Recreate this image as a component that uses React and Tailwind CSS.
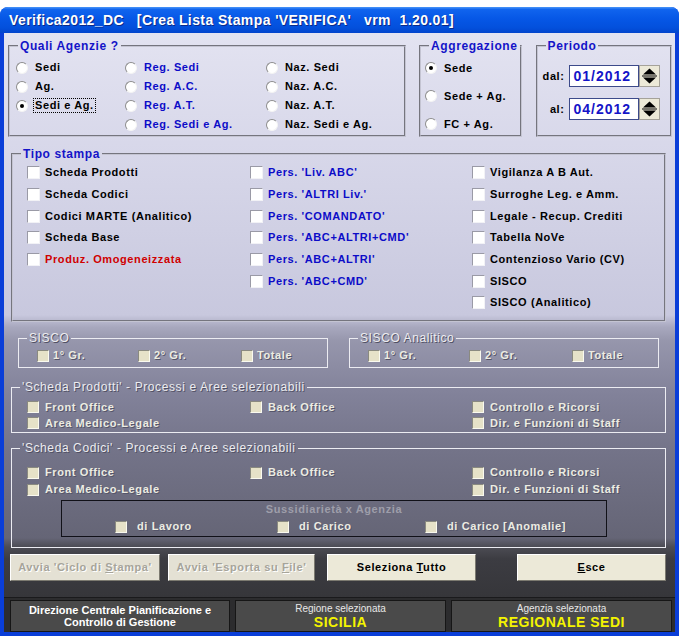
import React from 'react';

const txt = "font-['Liberation_Sans',Arial,sans-serif] font-bold text-[11px] tracking-[0.6px] leading-none whitespace-nowrap";

const Radio = ({ checked = false, focus = false, color = 'text-black', children }) => (
    <div className="flex items-center gap-[7px] h-full">
        <span className="relative flex items-center justify-center w-[12px] h-[12px] rounded-full bg-white border border-t-[#8d8d8d] border-l-[#8d8d8d] border-r-[#f4f4f4] border-b-[#f4f4f4] shrink-0">
            {checked && <span className="w-[4px] h-[4px] rounded-full bg-black" />}
        </span>
        <span className={`${txt} ${color} ${focus ? 'border border-dotted border-black px-[1px] py-[1px] -ml-[2px]' : ''}`}>
            {children}
        </span>
    </div>
);

const Check = ({ color = 'text-black', children }) => (
    <div className="flex items-center gap-[5px] h-full">
        <span className="w-[13px] h-[13px] bg-white border border-t-[#9a9aa6] border-l-[#9a9aa6] border-r-[#f2f2f6] border-b-[#f2f2f6] shrink-0" />
        <span className={`${txt} ${color}`}>{children}</span>
    </div>
);

const DisCheck = ({ gap = 'gap-[4px]', children }) => (
    <div className={`flex items-center ${gap} h-full`}>
        <span className="w-[12px] h-[12px] bg-[#e6e2c8] border border-t-[#8a8a80] border-l-[#8a8a80] border-r-[#fafaf0] border-b-[#fafaf0] shrink-0" />
        <span className={`${txt} text-[#ecece2] [text-shadow:1px_1px_0_#55556a]`}>{children}</span>
    </div>
);

const Legend = ({ light = false, children }) => (
    <legend
        className={`ml-[8px] px-[2px] ${txt} text-[12px] tracking-[0.3px] leading-[13px] ${
            light ? 'font-normal text-[#ececf0] [text-shadow:1px_1px_0_#505064]' : 'text-[#1414c8]'
        }`}
    >
        {children}
    </legend>
);

const Spin = () => (
    <div className="w-[21px] h-[22px] bg-[#ece9d8] border border-[#a5a29a] flex items-center justify-center">
        <svg width="17" height="18" viewBox="0 0 17 18">
            <polygon points="2,7.5 8.5,1.5 15,7.5" fill="#000" />
            <rect x="1" y="8.5" width="15" height="1" fill="#000" />
            <polygon points="2,10.5 15,10.5 8.5,16.5" fill="#000" />
        </svg>
    </div>
);

const Btn = ({ disabled = false, children, w }) => (
    <div
        className={`${w} h-[27px] flex items-center justify-center border border-t-white border-l-white border-r-[#7c7a70] border-b-[#7c7a70] ${
            disabled ? 'bg-[#e4e1d4] text-[#a6a49a] [text-shadow:1px_1px_0_#ffffff]' : 'bg-[#ece9d8] text-black'
        }`}
    >
        <span className={txt}>{children}</span>
    </div>
);

const App = () => {
    return (
        <div className="w-[686px] h-[643px] bg-white overflow-hidden">
            <div className="mt-[7px] w-[679px] h-[629px] rounded-t-[8px] bg-[#0a3ed8] flex flex-col overflow-hidden">

                {/* TITOLO */}
                <div className="h-[26px] shrink-0 flex items-center pl-[9px] bg-[linear-gradient(180deg,#4a96f8_0%,#1064ee_10%,#0657e6_45%,#0350dc_80%,#0244cc_100%)]">
                    <span className="font-['Liberation_Sans',Arial,sans-serif] font-bold text-[14px] tracking-[0.4px] text-white whitespace-pre [text-shadow:1px_1px_0_#0a2a8a]">
                        {"Verifica2012_DC   [Crea Lista Stampa 'VERIFICA'   vrm  1.20.01]"}
                    </span>
                </div>

                {/* CLIENT */}
                <div className="mx-[4px] mb-[4px] h-[599px] flex flex-col bg-[linear-gradient(180deg,#e3e3f1_0px,#d8d8ea_110px,#c8c8de_282px,#a8a8be_294px,#9696ac_308px,#82829a_360px,#737388_420px,#656576_505px,#4c4c54_514px,#3c3c42_526px,#36363a_564px)]">

                    {/* RIGA 1 */}
                    <div className="flex pt-[7px] pl-[4px]">
                        <fieldset className="w-[398px] h-[97px] border-2 [border-style:groove] border-[#c4c4d2]">
                            <Legend>Quali Agenzie ?</Legend>
                            <div className="flex pt-[6px]">
                                <div className="w-[115px] pl-[6px] flex flex-col">
                                    <div className="h-[19px]"><Radio>Sedi</Radio></div>
                                    <div className="h-[19px]"><Radio>Ag.</Radio></div>
                                    <div className="h-[19px]"><Radio checked focus>Sedi e Ag.</Radio></div>
                                </div>
                                <div className="w-[141px] flex flex-col">
                                    <div className="h-[19px]"><Radio color="text-[#0c0cc8]">Reg. Sedi</Radio></div>
                                    <div className="h-[19px]"><Radio color="text-[#0c0cc8]">Reg. A.C.</Radio></div>
                                    <div className="h-[19px]"><Radio color="text-[#0c0cc8]">Reg. A.T.</Radio></div>
                                    <div className="h-[19px]"><Radio color="text-[#0c0cc8]">Reg. Sedi e Ag.</Radio></div>
                                </div>
                                <div className="flex flex-col">
                                    <div className="h-[19px]"><Radio>Naz. Sedi</Radio></div>
                                    <div className="h-[19px]"><Radio>Naz. A.C.</Radio></div>
                                    <div className="h-[19px]"><Radio>Naz. A.T.</Radio></div>
                                    <div className="h-[19px]"><Radio>Naz. Sedi e Ag.</Radio></div>
                                </div>
                            </div>
                        </fieldset>

                        <fieldset className="ml-[13px] w-[97px] h-[97px] border-2 [border-style:groove] border-[#c4c4d2]">
                            <Legend>Aggregazione</Legend>
                            <div className="flex flex-col pl-[4px] pt-[2px]">
                                <div className="h-[28px]"><Radio checked>Sede</Radio></div>
                                <div className="h-[28px]"><Radio>Sede + Ag.</Radio></div>
                                <div className="h-[28px]"><Radio>FC + Ag.</Radio></div>
                            </div>
                        </fieldset>

                        <fieldset className="ml-[14px] w-[136px] h-[97px] border-2 [border-style:groove] border-[#c4c4d2]">
                            <Legend>Periodo</Legend>
                            <div className="flex flex-col gap-[11px] pt-[13px]">
                                {['dal:', 'al:'].map((l, i) => (
                                    <div key={l} className="flex items-center">
                                        <span className={`w-[27px] text-right ${txt} text-black`}>{l}</span>
                                        <div className="ml-[4px] w-[70px] h-[22px] bg-white border border-[#3c4a8a] flex items-center pl-[4px]">
                                            <span className="font-['Liberation_Sans',Arial,sans-serif] font-bold text-[14px] tracking-[1px] text-[#1414c8] leading-none">
                                                {i === 0 ? '01/2012' : '04/2012'}
                                            </span>
                                        </div>
                                        <Spin />
                                    </div>
                                ))}
                            </div>
                        </fieldset>
                    </div>

                    {/* TIPO STAMPA */}
                    <fieldset className="mt-[11px] ml-[7px] w-[655px] h-[174px] border-2 [border-style:groove] border-[#c4c4d2]">
                        <Legend>Tipo stampa</Legend>
                        <div className="flex pt-[2px]">
                            <div className="w-[237px] pl-[14px] flex flex-col">
                                <div className="h-[21.7px]"><Check>Scheda Prodotti</Check></div>
                                <div className="h-[21.7px]"><Check>Scheda Codici</Check></div>
                                <div className="h-[21.7px]"><Check>Codici MARTE (Analitico)</Check></div>
                                <div className="h-[21.7px]"><Check>Scheda Base</Check></div>
                                <div className="h-[21.7px]"><Check color="text-[#d00000]">Produz. Omogeneizzata</Check></div>
                            </div>
                            <div className="w-[222px] flex flex-col">
                                <div className="h-[21.7px]"><Check color="text-[#0c0cc8]">Pers. 'Liv. ABC'</Check></div>
                                <div className="h-[21.7px]"><Check color="text-[#0c0cc8]">Pers. 'ALTRI Liv.'</Check></div>
                                <div className="h-[21.7px]"><Check color="text-[#0c0cc8]">Pers. 'COMANDATO'</Check></div>
                                <div className="h-[21.7px]"><Check color="text-[#0c0cc8]">Pers. 'ABC+ALTRI+CMD'</Check></div>
                                <div className="h-[21.7px]"><Check color="text-[#0c0cc8]">Pers. 'ABC+ALTRI'</Check></div>
                                <div className="h-[21.7px]"><Check color="text-[#0c0cc8]">Pers. 'ABC+CMD'</Check></div>
                            </div>
                            <div className="flex flex-col">
                                <div className="h-[21.7px]"><Check>Vigilanza A B Aut.</Check></div>
                                <div className="h-[21.7px]"><Check>Surroghe Leg. e Amm.</Check></div>
                                <div className="h-[21.7px]"><Check>Legale - Recup. Crediti</Check></div>
                                <div className="h-[21.7px]"><Check>Tabella NoVe</Check></div>
                                <div className="h-[21.7px]"><Check>Contenzioso Vario (CV)</Check></div>
                                <div className="h-[21.7px]"><Check>SISCO</Check></div>
                                <div className="h-[21.7px]"><Check>SISCO (Analitico)</Check></div>
                            </div>
                        </div>
                    </fieldset>

                    {/* SISCO */}
                    <div className="flex mt-[10px] pl-[14px] gap-[21px]">
                        {['SISCO', 'SISCO Analitico'].map((t) => (
                            <fieldset key={t} className="w-[310px] h-[36px] border border-[#ececf2]">
                                <Legend light>{t}</Legend>
                                <div className="flex h-[17px] pl-[18px] mt-[3px]">
                                    <div className="w-[101px]"><DisCheck>1° Gr.</DisCheck></div>
                                    <div className="w-[103px]"><DisCheck>2° Gr.</DisCheck></div>
                                    <div><DisCheck>Totale</DisCheck></div>
                                </div>
                            </fieldset>
                        ))}
                    </div>

                    {/* SCHEDA PRODOTTI */}
                    <fieldset className="mt-[13px] ml-[7px] w-[655px] h-[52px] border border-[#ececf2]">
                        <Legend light>'Scheda Prodotti' - Processi e Aree selezionabili</Legend>
                        <div className="flex pt-[6px]">
                            <div className="w-[238px] pl-[15px] flex flex-col">
                                <div className="h-[16px]"><DisCheck gap="gap-[6px]">Front Office</DisCheck></div>
                                <div className="h-[16px]"><DisCheck gap="gap-[6px]">Area Medico-Legale</DisCheck></div>
                            </div>
                            <div className="w-[222px]">
                                <div className="h-[16px]"><DisCheck gap="gap-[6px]">Back Office</DisCheck></div>
                            </div>
                            <div className="flex flex-col">
                                <div className="h-[16px]"><DisCheck gap="gap-[6px]">Controllo e Ricorsi</DisCheck></div>
                                <div className="h-[16px]"><DisCheck gap="gap-[6px]">Dir. e Funzioni di Staff</DisCheck></div>
                            </div>
                        </div>
                    </fieldset>

                    {/* SCHEDA CODICI */}
                    <fieldset className="mt-[9px] ml-[7px] w-[655px] h-[106px] border border-[#ececf2]">
                        <Legend light>'Scheda Codici' - Processi e Aree selezionabili</Legend>
                        <div className="flex pt-[10px]">
                            <div className="w-[238px] pl-[15px] flex flex-col">
                                <div className="h-[17px]"><DisCheck gap="gap-[6px]">Front Office</DisCheck></div>
                                <div className="h-[17px]"><DisCheck gap="gap-[6px]">Area Medico-Legale</DisCheck></div>
                            </div>
                            <div className="w-[222px]">
                                <div className="h-[17px]"><DisCheck gap="gap-[6px]">Back Office</DisCheck></div>
                            </div>
                            <div className="flex flex-col">
                                <div className="h-[17px]"><DisCheck gap="gap-[6px]">Controllo e Ricorsi</DisCheck></div>
                                <div className="h-[17px]"><DisCheck gap="gap-[6px]">Dir. e Funzioni di Staff</DisCheck></div>
                            </div>
                        </div>
                        <div className="mt-[2px] ml-[49px] w-[546px] h-[37px] border border-[#111118] flex flex-col">
                            <div className={`h-[16px] flex items-center justify-center ${txt} text-[10px] text-[#9e9eaa]`}>
                                Sussidiarietà x Agenzia
                            </div>
                            <div className="flex h-[19px] pl-[53px]">
                                <div className="w-[162px]"><DisCheck gap="gap-[10px]">di Lavoro</DisCheck></div>
                                <div className="w-[148px]"><DisCheck gap="gap-[10px]">di Carico</DisCheck></div>
                                <div><DisCheck gap="gap-[10px]">di Carico [Anomalie]</DisCheck></div>
                            </div>
                        </div>
                    </fieldset>

                    {/* PULSANTI */}
                    <div className="flex mt-[6px] pl-[6px]">
                        <Btn disabled w="w-[150px]">Avvia 'Ciclo di <u>S</u>tampa'</Btn>
                        <div className="ml-[8px]"><Btn disabled w="w-[147px]">Avvia 'Esporta su <u>F</u>ile'</Btn></div>
                        <div className="ml-[12px]"><Btn w="w-[149px]">Seleziona <u>T</u>utto</Btn></div>
                        <div className="ml-[41px]"><Btn w="w-[149px]"><u>E</u>sce</Btn></div>
                    </div>

                    {/* STATUS */}
                    <div className="mt-[16px] flex-1 bg-[#2c2c2e] border-t border-[#1a1a1c] flex gap-[5px] pl-[6px] pt-[2px]">
                        <div className="w-[220px] h-[32px] bg-[#4a4a4a] border border-[#161616] flex flex-col items-center justify-center">
                            <span className="font-['Liberation_Sans',Arial,sans-serif] font-bold text-[11px] leading-[12px] text-white">Direzione Centrale Pianificazione e</span>
                            <span className="font-['Liberation_Sans',Arial,sans-serif] font-bold text-[11px] leading-[12px] text-white">Controllo di Gestione</span>
                        </div>
                        {[
                            ['Regione selezionata', 'SICILIA', 'w-[211px]'],
                            ['Agenzia selezionata', 'REGIONALE SEDI', 'w-[221px]'],
                        ].map(([a, b, w]) => (
                            <div key={a} className={`${w} h-[32px] bg-[#4a4a4a] border border-[#161616] flex flex-col items-center pt-[2px]`}>
                                <span className="font-['Liberation_Sans_Narrow','Liberation_Sans',Arial,sans-serif] text-[10px] leading-[11px] text-[#e8e8e8]">{a}</span>
                                <span className="font-['Liberation_Sans',Arial,sans-serif] font-bold text-[14px] leading-[17px] tracking-[0.5px] text-[#f4f400]">{b}</span>
                            </div>
                        ))}
                    </div>
                </div>
            </div>
        </div>
    );
};

export default App;
